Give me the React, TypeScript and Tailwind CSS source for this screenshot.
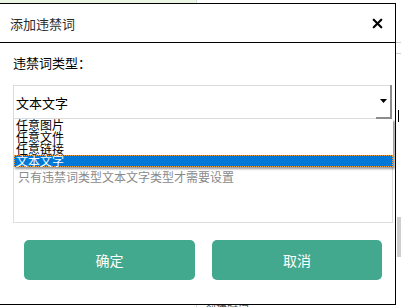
import { X } from "lucide-react";

const options = ["任意图片", "任意文件", "任意链接", "文本文字"];

const App = () => {
  return (
    <div className="relative w-[401px] h-[307px] overflow-hidden bg-white font-['Noto_Sans_CJK_SC','Noto_Sans',sans-serif] text-black">
      {/* page behind the dialog */}
      <div className="absolute left-0 top-0 w-[196px] h-[4px] bg-[#eaf5e2]" />
      <div className="absolute left-[196px] top-0 bottom-0 w-px bg-[#d8d8d8]" />
      <div className="absolute left-[396px] top-[42px] w-[5px] h-px bg-[#d0d0d0]" />
      <div className="absolute left-[396px] top-[53px] w-[5px] h-px bg-[#d0d0d0]" />
      <div className="absolute left-[398px] top-[110px] w-px h-[12px] bg-black" />
      <div className="absolute left-[397px] top-[217px] w-[4px] h-[40px] bg-[#cfcfcf]" />
      <span className="absolute left-[205px] top-[304px] text-[11px] leading-[11px] text-[#555]">
        创建时间
      </span>

      {/* dialog */}
      <div className="absolute left-[-2px] top-[3px] w-[398px] h-[302px] border border-black bg-white flex flex-col">
        <div className="h-[39px] flex items-center justify-between border-b border-black pl-[11px] pr-[10px]">
          <h3 className="text-[13px] leading-[13px] text-[#2a2a2a]">添加违禁词</h3>
          <X className="w-[15px] h-[15px]" strokeWidth={3.5} />
        </div>

        <div className="pl-[14px] pr-[3px]">
          <div className="h-[38px] mb-[4px] flex items-center text-[13px] leading-[13px]">
            违禁词类型：
          </div>

          <div className="relative w-[379px] h-[34px] border border-[#dcdcdc] flex items-center pl-[2px] text-[13px] leading-[13px]">
            <span>文本文字</span>
            <div className="absolute right-[-1px] top-[-1px] w-[16px] h-[34px] border-r-2 border-b-2 border-[#8c8c8c] flex items-center justify-center">
              <svg width="7" height="4" viewBox="0 0 7 4">
                <path d="M0 0h7L3.5 4z" fill="#000" />
              </svg>
            </div>

            <ul className="absolute left-[-1px] top-[33px] z-10 w-[380px] bg-white shadow-[2px_2px_2px_rgba(0,0,0,0.4)] border-l border-[#cfcfcf]">
              {options.map((o) => (
                <li
                  key={o}
                  className={
                    o === "文本文字"
                      ? "h-[12px] leading-[10px] text-[12px] pl-[1px] bg-[#0078d7] text-white border border-dotted border-[#f0a040]"
                      : "h-[12px] leading-[12px] text-[12px] pl-[2px]"
                  }
                >
                  {o}
                </li>
              ))}
            </ul>
          </div>

          <div className="w-[380px] h-[104px] border border-[#dedede] pl-[4px] pt-[50px] text-[12px] leading-[14px] text-[#8a8a8a]">
            只有违禁词类型文本文字类型才需要设置
          </div>

          <div className="flex gap-[17px] mt-[17px] ml-[11px]">
            <button className="w-[171px] h-[40px] rounded-[5px] bg-[#43a98e] text-white text-[14px] font-normal">
              确定
            </button>
            <button className="w-[170px] h-[40px] rounded-[5px] bg-[#43a98e] text-white text-[14px] font-normal">
              取消
            </button>
          </div>
        </div>
      </div>
    </div>
  );
};

export default App;
